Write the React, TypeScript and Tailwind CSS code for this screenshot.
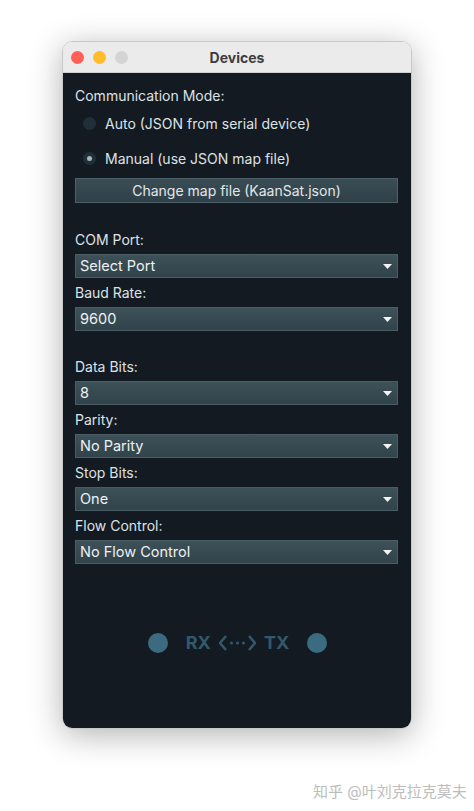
import React from "react";

const font = { fontFamily: "Inter, 'Liberation Sans', 'Noto Sans CJK SC', sans-serif" };

function Radio({ checked, label }: { checked?: boolean; label: string }) {
  return (
    <div className="flex items-center h-[35px] pl-[8px] gap-[9px]">
      <span className="w-[13px] h-[13px] rounded-full bg-[#1f3038] flex items-center justify-center">
        {checked && <span className="w-[5px] h-[5px] rounded-full bg-[#a9b6bc]" />}
      </span>
      <span className="text-[14px] text-[#dde2e6]">{label}</span>
    </div>
  );
}

function Select({ label, value }: { label: string; value: string }) {
  return (
    <>
      <div className="h-[29px] flex items-center text-[14px] text-[#dde2e6]">{label}</div>
      <div className="h-[24px] flex items-center justify-between pl-[4px] pr-[5px] border border-[#4a5c64] bg-gradient-to-b from-[#3d5159] to-[#31434b] text-[14.5px] text-[#eef1f3]">
        <span>{value}</span>
        <svg width="9" height="5" viewBox="0 0 9 5">
          <path d="M0 0 H9 L4.5 5 Z" fill="#f2f4f5" />
        </svg>
      </div>
    </>
  );
}

export default function App() {
  return (
    <div className="w-[474px] h-[811px] bg-white flex flex-col" style={font}>
      <div className="ml-[62px] mt-[41px] w-[350px] h-[688px] rounded-[10px] overflow-hidden flex flex-col shadow-[0_6px_32px_rgba(0,0,0,0.3)] border border-[#c9c9c9]">
        <div className="h-[31px] bg-[#ebebeb] relative flex items-center justify-center border-b border-[#d0d0d0]">
          <div className="absolute left-[8px] top-[9px] flex gap-[9px]">
            <span className="w-[13px] h-[13px] rounded-full bg-[#fe5f57]" />
            <span className="w-[13px] h-[13px] rounded-full bg-[#febc2e]" />
            <span className="w-[13px] h-[13px] rounded-full bg-[#d4d4d4]" />
          </div>
          <span className="text-[14px] font-bold text-[#3d3d3d]">Devices</span>
        </div>
        <div className="flex-1 bg-[#141a21] pl-[12px] pr-[13px] pt-[14px] flex flex-col">
          <div className="text-[14px] leading-[17px] text-[#dde2e6]">Communication Mode:</div>
          <div className="mt-[2px]">
            <Radio label="Auto (JSON from serial device)" />
            <Radio checked label="Manual (use JSON map file)" />
          </div>
          <div className="mt-[2px] h-[25px] flex items-center justify-center border border-[#4d5f67] bg-gradient-to-b from-[#3a4c54] to-[#2f4048] text-[14px] text-[#e3e7ea]">
            Change map file (KaanSat.json)
          </div>
          <div className="h-[22px]" />
          <Select label="COM Port:" value="Select Port" />
          <Select label="Baud Rate:" value="9600" />
          <div className="h-[21px]" />
          <Select label="Data Bits:" value="8" />
          <Select label="Parity:" value="No Parity" />
          <Select label="Stop Bits:" value="One" />
          <Select label="Flow Control:" value="No Flow Control" />
          <div className="mt-[65px] flex items-center justify-center gap-[18px] pl-[2px]">
            <span className="w-[20px] h-[20px] rounded-full bg-[#3b6b81]" />
            <div className="flex items-center gap-[8px] text-[18px] font-bold text-[#31596b]">
              <span>RX</span>
              <svg width="37" height="18" viewBox="0 0 37 18">
                <path d="M7 2 L1 9 L7 16" stroke="#31596b" strokeWidth="2.6" fill="none" />
                <path d="M30 2 L36 9 L30 16" stroke="#31596b" strokeWidth="2.6" fill="none" />
                <circle cx="12.5" cy="9" r="1.5" fill="#31596b" />
                <circle cx="18.5" cy="9" r="1.5" fill="#31596b" />
                <circle cx="24.5" cy="9" r="1.5" fill="#31596b" />
              </svg>
              <span>TX</span>
            </div>
            <span className="w-[20px] h-[20px] rounded-full bg-[#3b6b81]" />
          </div>
        </div>
      </div>
      <div className="mt-[52px] pl-[313px] text-[15px] text-[#bdbdbd]">知乎 @叶刘克拉克莫夫</div>
    </div>
  );
}
